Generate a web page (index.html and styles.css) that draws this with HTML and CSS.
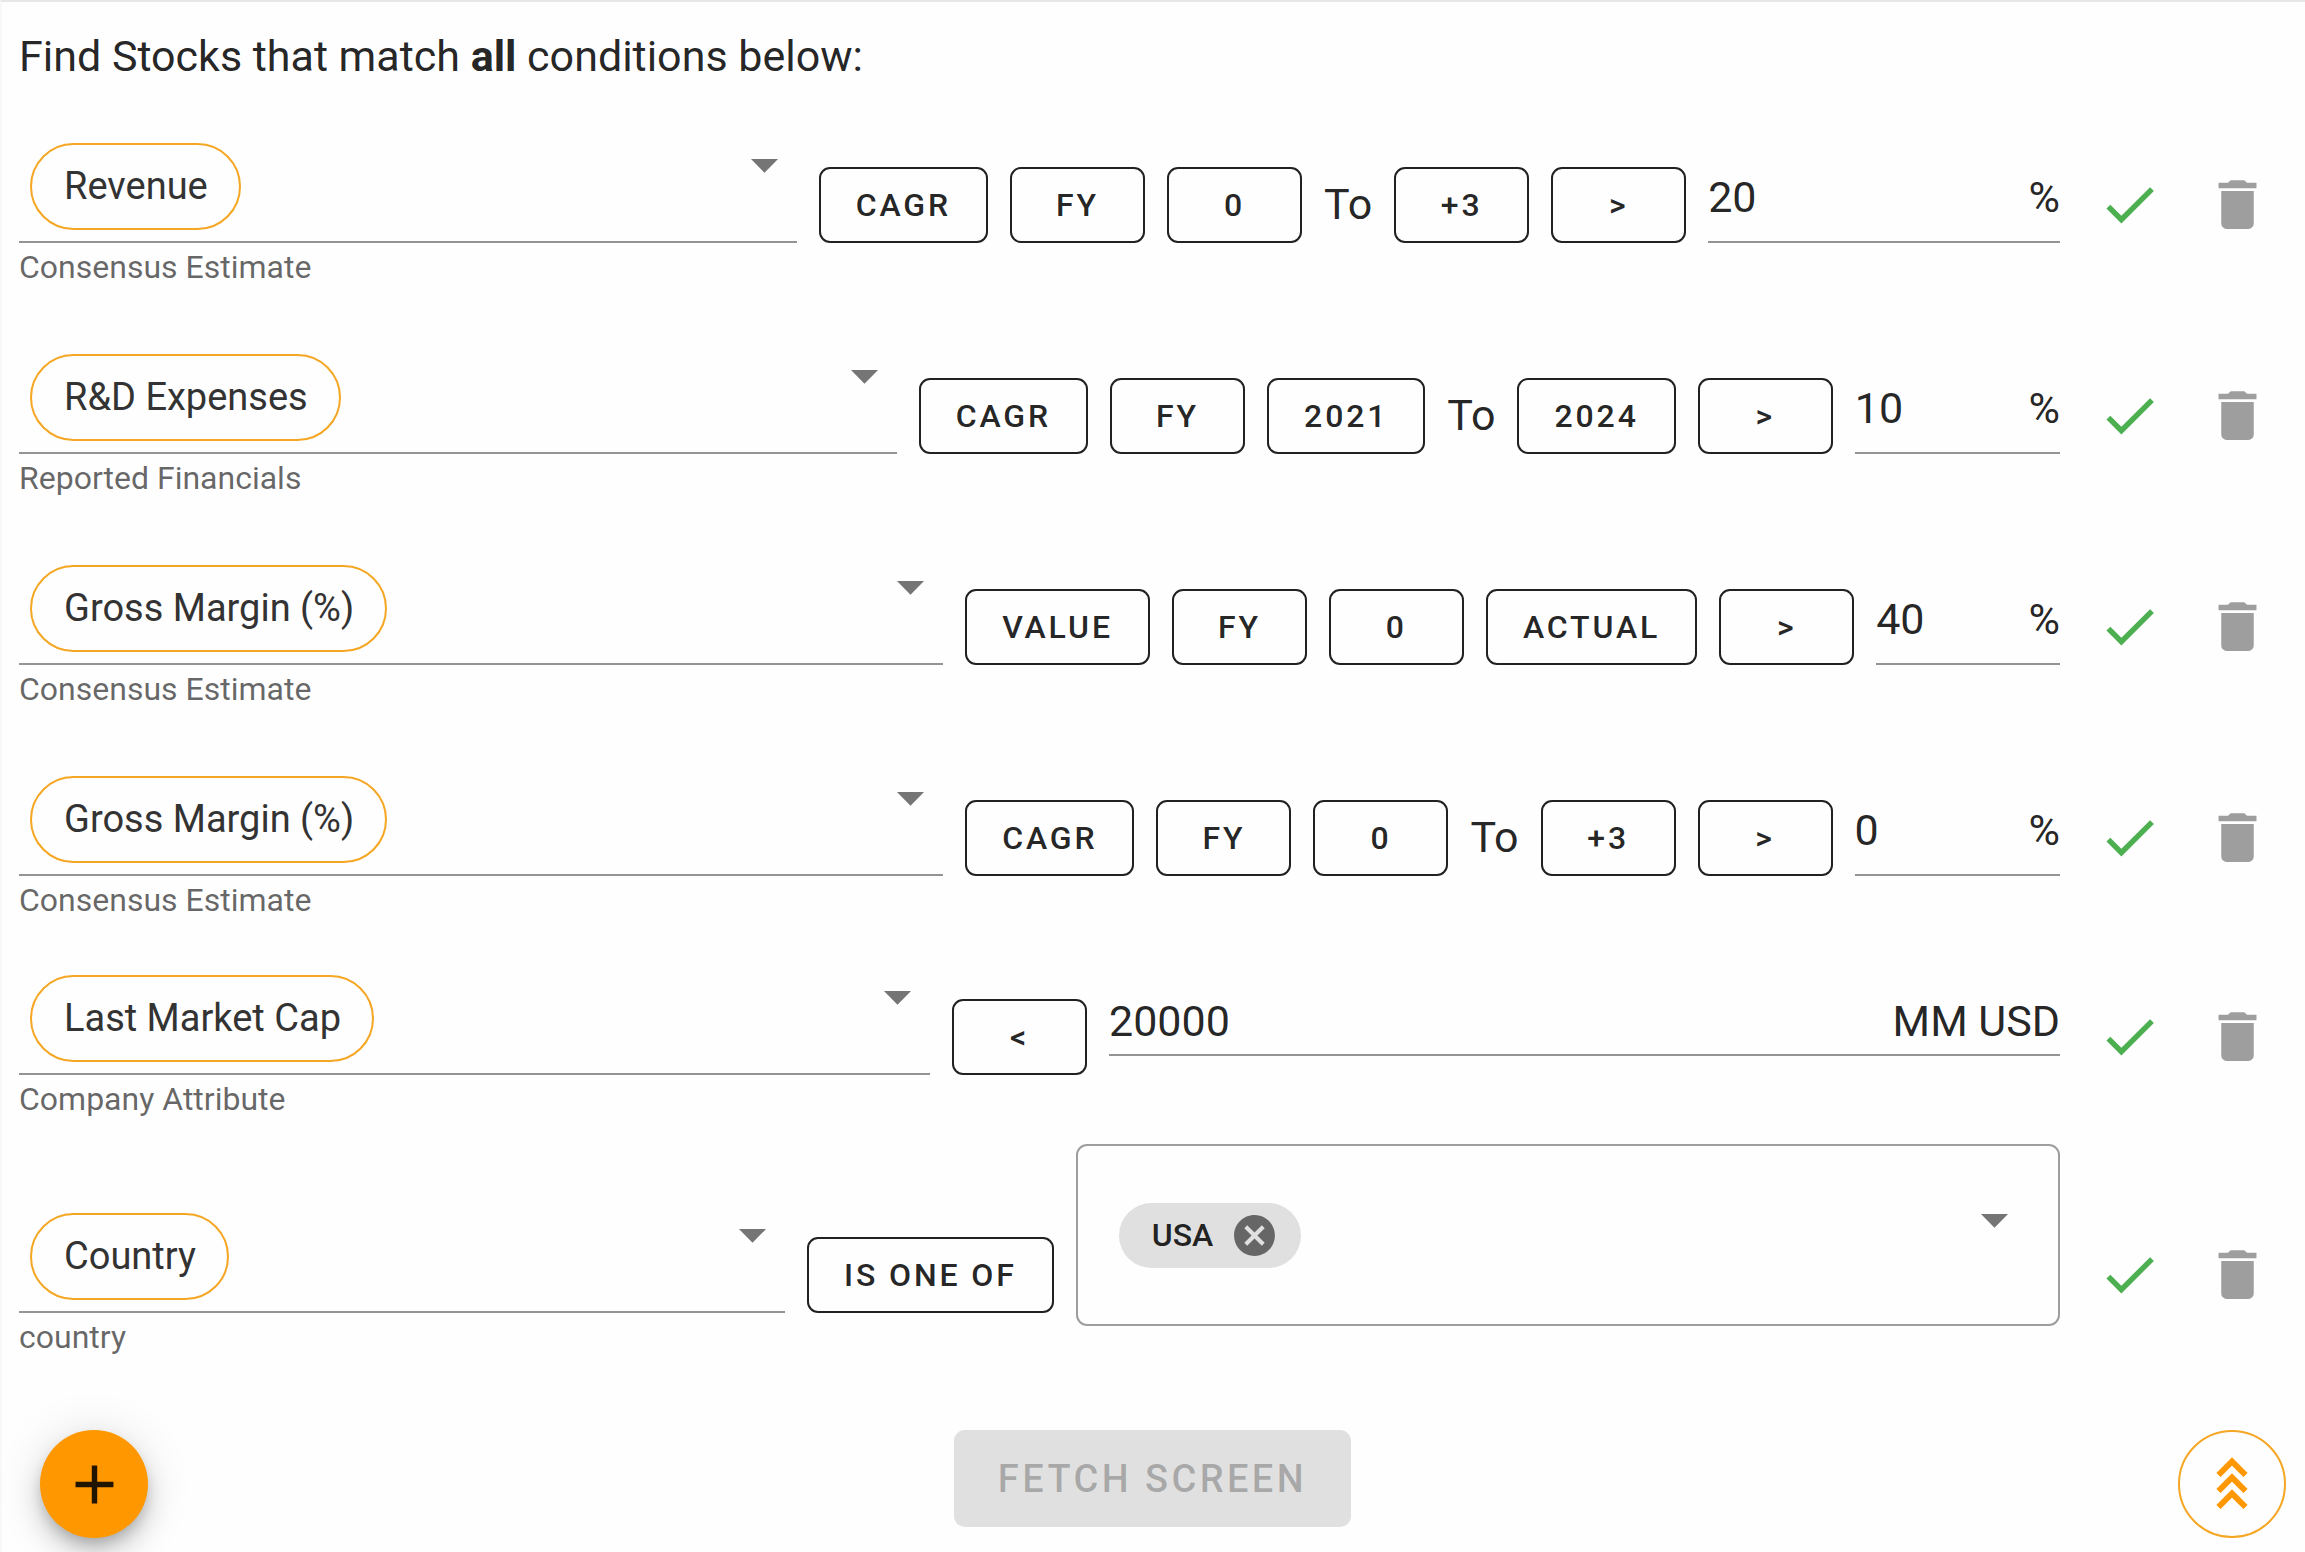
FILE: index.html
```
<!DOCTYPE html>
<html lang="en">
<head>
<meta charset="UTF-8">
<title>Stock Screener</title>
<link rel="stylesheet" href="styles.css">
</head>
<body>
<svg class="icon-defs" width="0" height="0" aria-hidden="true">
  <symbol id="arrow" viewBox="0 0 24 24"><path d="M7,10L12,15L17,10H7Z"/></symbol>
  <symbol id="check" viewBox="0 0 24 24"><path d="M21,7L9,19L3.5,13.5L4.91,12.09L9,16.17L19.59,5.59L21,7Z"/></symbol>
  <symbol id="trash" viewBox="0 0 24 24"><path d="M19,4H15.5L14.5,3H9.5L8.5,4H5V6H19M6,19A2,2 0 0,0 8,21H16A2,2 0 0,0 18,19V7H6V19Z"/></symbol>
  <symbol id="plus" viewBox="0 0 24 24"><path d="M19,13H13V19H11V13H5V11H11V5H13V11H19V13Z"/></symbol>
  <symbol id="close" viewBox="0 0 24 24"><path d="M12,2C17.53,2 22,6.47 22,12C22,17.53 17.53,22 12,22C6.47,22 2,17.53 2,12C2,6.47 6.47,2 12,2M15.59,7L12,10.59L8.41,7L7,8.41L10.59,12L7,15.59L8.41,17L12,13.41L15.59,17L17,15.59L13.41,12L17,8.41L15.59,7Z"/></symbol>
</svg>

<form class="screener">
  <h1>Find Stocks that match <b>all</b> conditions below:</h1>

  <div class="condition">
    <div class="line">
      <div class="metric">
        <span class="chip">Revenue</span>
        <input type="text" id="metric1" aria-label="Metric" aria-describedby="hint1">
        <svg class="icon arrow"><use href="#arrow"/></svg>
      </div>
      <button type="button" class="option">CAGR</button>
      <button type="button" class="option">FY</button>
      <button type="button" class="option">0</button>
      <span class="to">To</span>
      <button type="button" class="option">+3</button>
      <button type="button" class="option">&gt;</button>
      <div class="value">
        <input type="text" id="value1" value="20" aria-label="Value">
        <label for="value1">%</label>
      </div>
      <svg class="icon check"><use href="#check"/></svg>
      <button type="button" class="delete" aria-label="Delete condition"><svg class="icon"><use href="#trash"/></svg></button>
    </div>
    <p class="hint" id="hint1">Consensus Estimate</p>
  </div>

  <div class="condition">
    <div class="line">
      <div class="metric">
        <span class="chip">R&amp;D Expenses</span>
        <input type="text" id="metric2" aria-label="Metric" aria-describedby="hint2">
        <svg class="icon arrow"><use href="#arrow"/></svg>
      </div>
      <button type="button" class="option">CAGR</button>
      <button type="button" class="option">FY</button>
      <button type="button" class="option">2021</button>
      <span class="to">To</span>
      <button type="button" class="option">2024</button>
      <button type="button" class="option">&gt;</button>
      <div class="value">
        <input type="text" id="value2" value="10" aria-label="Value">
        <label for="value2">%</label>
      </div>
      <svg class="icon check"><use href="#check"/></svg>
      <button type="button" class="delete" aria-label="Delete condition"><svg class="icon"><use href="#trash"/></svg></button>
    </div>
    <p class="hint" id="hint2">Reported Financials</p>
  </div>

  <div class="condition">
    <div class="line">
      <div class="metric">
        <span class="chip">Gross Margin (%)</span>
        <input type="text" id="metric3" aria-label="Metric" aria-describedby="hint3">
        <svg class="icon arrow"><use href="#arrow"/></svg>
      </div>
      <button type="button" class="option">VALUE</button>
      <button type="button" class="option">FY</button>
      <button type="button" class="option">0</button>
      <button type="button" class="option">ACTUAL</button>
      <button type="button" class="option">&gt;</button>
      <div class="value">
        <input type="text" id="value3" value="40" aria-label="Value">
        <label for="value3">%</label>
      </div>
      <svg class="icon check"><use href="#check"/></svg>
      <button type="button" class="delete" aria-label="Delete condition"><svg class="icon"><use href="#trash"/></svg></button>
    </div>
    <p class="hint" id="hint3">Consensus Estimate</p>
  </div>

  <div class="condition">
    <div class="line">
      <div class="metric">
        <span class="chip">Gross Margin (%)</span>
        <input type="text" id="metric4" aria-label="Metric" aria-describedby="hint4">
        <svg class="icon arrow"><use href="#arrow"/></svg>
      </div>
      <button type="button" class="option">CAGR</button>
      <button type="button" class="option">FY</button>
      <button type="button" class="option">0</button>
      <span class="to">To</span>
      <button type="button" class="option">+3</button>
      <button type="button" class="option">&gt;</button>
      <div class="value">
        <input type="text" id="value4" value="0" aria-label="Value">
        <label for="value4">%</label>
      </div>
      <svg class="icon check"><use href="#check"/></svg>
      <button type="button" class="delete" aria-label="Delete condition"><svg class="icon"><use href="#trash"/></svg></button>
    </div>
    <p class="hint" id="hint4">Consensus Estimate</p>
  </div>

  <div class="condition attribute">
    <div class="line">
      <div class="metric">
        <span class="chip">Last Market Cap</span>
        <input type="text" id="metric5" aria-label="Metric" aria-describedby="hint5">
        <svg class="icon arrow"><use href="#arrow"/></svg>
      </div>
      <button type="button" class="option">&lt;</button>
      <div class="value compact">
        <input type="text" id="value5" value="20000" aria-label="Value">
        <label for="value5">MM USD</label>
      </div>
      <svg class="icon check"><use href="#check"/></svg>
      <button type="button" class="delete" aria-label="Delete condition"><svg class="icon"><use href="#trash"/></svg></button>
    </div>
    <p class="hint" id="hint5">Company Attribute</p>
  </div>

  <div class="condition country">
    <div class="line">
      <div class="metric">
        <span class="chip">Country</span>
        <input type="text" id="metric6" aria-label="Metric" aria-describedby="hint6">
        <svg class="icon arrow"><use href="#arrow"/></svg>
      </div>
      <button type="button" class="option">IS ONE OF</button>
      <div class="multi">
        <span class="tag">USA
          <button type="button" aria-label="Remove USA"><svg><use href="#close"/></svg></button>
        </span>
        <input type="text" id="value6" aria-label="Countries">
        <svg class="icon arrow"><use href="#arrow"/></svg>
      </div>
      <svg class="icon check"><use href="#check"/></svg>
      <button type="button" class="delete" aria-label="Delete condition"><svg class="icon"><use href="#trash"/></svg></button>
    </div>
    <p class="hint" id="hint6">country</p>
  </div>

  <div class="actions">
    <button type="button" class="round add" aria-label="Add condition"><svg class="icon"><use href="#plus"/></svg></button>
    <button type="submit" class="fetch" disabled>FETCH SCREEN</button>
    <button type="button" class="round up" aria-label="Collapse"><svg viewBox="0 0 32 54"><path d="M2.5 18L16 4.5L29.5 18M2.5 34L16 20.5L29.5 34M2.5 50L16 36.5L29.5 50"/></svg></button>
  </div>
</form>
</body>
</html>
```
FILE: styles.css
```
* {
  box-sizing: border-box;
}

body {
  margin: 0;
  background-color: #fefefe;
  color: rgba(0, 0, 0, 0.87);
  font-family: Roboto, "Liberation Sans", sans-serif;
  font-size: 43px;
  line-height: 50px;
}

button, input {
  font-family: inherit;
  color: inherit;
}

button {
  padding: 0;
  border: none;
  background: none;
  cursor: pointer;
}

input {
  min-width: 0;
  padding: 0;
  border: none;
  outline: none;
  background: none;
  font-size: 43px;
  line-height: 50px;
}

.icon-defs {
  position: absolute;
}

.icon {
  display: block;
  flex: none;
  width: 65px;
  height: 65px;
  fill: currentColor;
}

.screener {
  padding: 22px 19px 16px 17px;
  border-top: 2px solid #e6e6e6;
  border-left: 2px solid #f8f8f8;
}

h1 {
  margin: 0 0 44px;
  font-size: 43px;
  font-weight: 400;
  line-height: 64px;
}

.condition {
  margin-bottom: 60px;
}

.condition:nth-of-type(4) {
  margin-bottom: 48px;
}

.condition.attribute {
  margin-bottom: 29px;
}

.condition.country {
  margin-bottom: 77px;
}

.line {
  display: flex;
  align-items: flex-end;
  gap: 22px;
}

/* metric picker */
.metric {
  display: flex;
  flex: none;
  height: 111px;
  border-bottom: 2px solid #949494;
}

.metric input {
  width: 480px;
}

.chip {
  height: 87px;
  margin: 11px;
  padding: 0 31px 0 32px;
  border: 2px solid #f5a623;
  border-radius: 44px;
  color: #333;
  font-size: 38px;
  line-height: 83px;
  white-space: nowrap;
}

.arrow {
  color: rgba(0, 0, 0, 0.54);
}

.hint {
  margin: 8px 0 0;
  color: rgba(0, 0, 0, 0.6);
  font-size: 32px;
  line-height: 32px;
}

.option {
  flex: none;
  min-width: 135px;
  height: 76px;
  padding: 0 35px;
  border: 2px solid #212121;
  border-radius: 11px;
  font-size: 32px;
  font-weight: 500;
  letter-spacing: 0.09em;
}

.to {
  margin-bottom: 14px;
}

.value {
  display: flex;
  flex: 1;
  min-width: 0;
  padding-bottom: 19px;
  border-bottom: 2px solid #949494;
}

.value input {
  flex: 1;
}

.value.compact {
  margin-bottom: 19px;
  padding-bottom: 8px;
}

/* country picker */
.multi {
  display: flex;
  flex: 1;
  align-items: center;
  min-width: 0;
  height: 182px;
  margin-bottom: -13px;
  padding: 0 31px 0 41px;
  border: 2px solid #9e9e9e;
  border-radius: 11px;
}

.multi input {
  flex: 1;
}

.multi .arrow {
  align-self: flex-start;
  margin-top: 41px;
}

.tag {
  display: flex;
  align-items: center;
  gap: 17px;
  height: 65px;
  padding: 0 22px 0 33px;
  border-radius: 33px;
  background-color: #e0e0e0;
  font-size: 32px;
  font-weight: 500;
}

.tag button, .tag svg {
  display: block;
  width: 49px;
  height: 49px;
  fill: #666;
}

.check {
  margin: 0 21px 6px 15px;
  color: #4caf50;
}

.delete {
  margin: 0 16px 6px 0;
  color: #9e9e9e;
}

/* bottom buttons */
.actions {
  display: grid;
  grid-template-columns: 1fr auto 1fr;
  align-items: start;
}

.round {
  display: flex;
  align-items: center;
  justify-content: center;
  width: 108px;
  height: 108px;
  border-radius: 50%;
}

.add {
  margin-left: 21px;
  background-color: #ff9800;
  box-shadow: 0 8px 14px -3px rgba(0, 0, 0, 0.2), 0 16px 27px rgba(0, 0, 0, 0.14), 0 3px 48px rgba(0, 0, 0, 0.12);
}

.up {
  justify-self: end;
  border: 2px solid #f5a623;
}

.up svg {
  width: 32px;
  height: 54px;
  fill: none;
  stroke: #ff9800;
  stroke-width: 6;
}

.fetch {
  width: 397px;
  height: 97px;
  border-radius: 11px;
  background-color: #e0e0e0;
  color: rgba(0, 0, 0, 0.26);
  font-size: 38px;
  font-weight: 500;
  letter-spacing: 0.09em;
}
```
